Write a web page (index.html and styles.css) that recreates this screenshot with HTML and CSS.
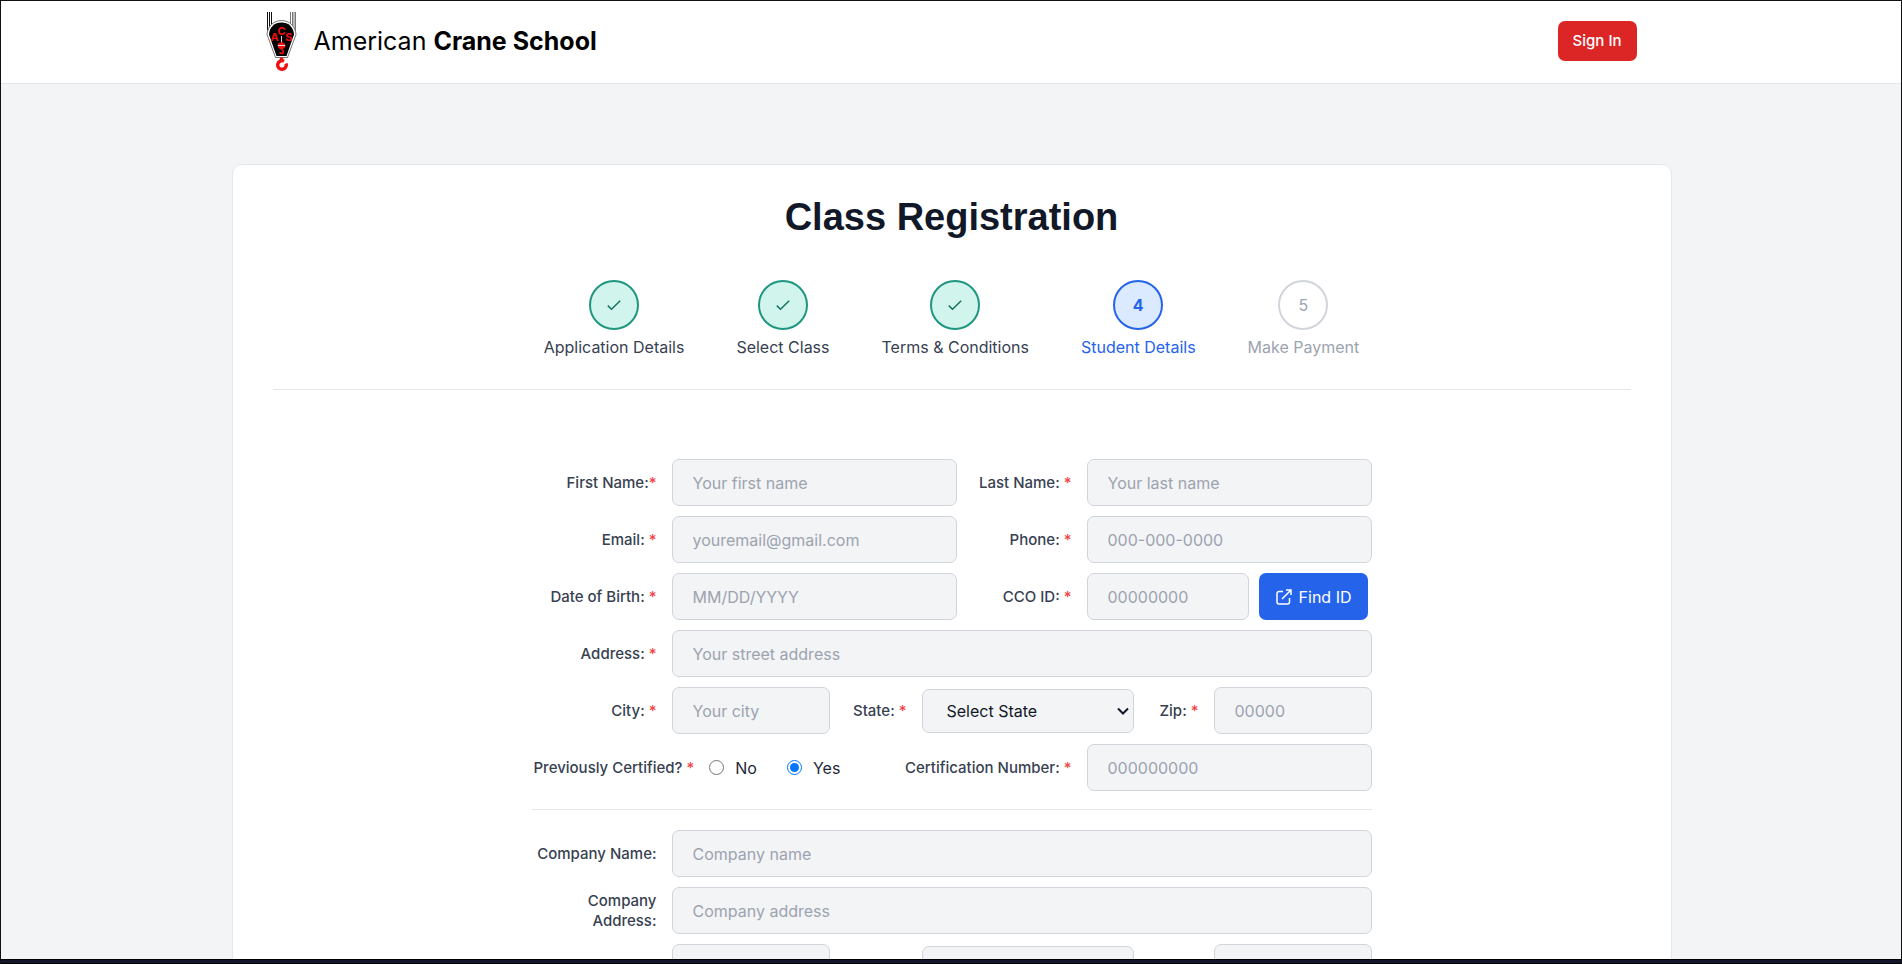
FILE: index.html
```html
<!DOCTYPE html>
<html lang="en">
<head>
<meta charset="utf-8">
<meta name="viewport" content="width=device-width, initial-scale=1">
<title>Class Registration - American Crane School</title>
<link rel="stylesheet" href="styles.css">
</head>
<body>
<div class="window">
  <div class="page">
    <header class="site-header">
      <div class="site-header-inner">
        <a class="brand" href="#">
          <svg class="brand-logo" viewBox="0 0 32 60" aria-hidden="true">
            <path d="M1.500 1v20M3.500 1v16M5.500 1v14" stroke="#111" stroke-width="1" fill="none"/>
            <path d="M24.500 1v14M26.500 1v16M28 1v18M29.500 1v20" stroke="#777" stroke-width="1" fill="none"/>
            <path d="M15.500 9.500C23.500 9.500 29.500 15.500 30 23.500L21.500 46.500H9.500L1 23.500C1.500 15.500 7.500 9.500 15.500 9.500z" fill="#fff" stroke="#777" stroke-width="1"/>
            <path d="M15.500 11.500C22.500 11.500 27.500 16 28 23.500L20.500 45H10.500L3 23.500C3.500 16 8.500 11.500 15.500 11.500z" fill="#000"/>
            <g fill="#f01010" font-family="Inter, sans-serif" font-weight="700" font-size="11" text-anchor="middle">
              <text x="15.500" y="23.500">C</text><text x="8.500" y="30">A</text><text x="22.800" y="30">S</text>
            </g>
            <path d="M15.500 25v7" stroke="#ccc" stroke-width="1"/>
            <path d="M11.800 34.500a3.700 3.200 0 0 1 7.400 0l-.2 2-2.500 2h-2l-2.500-2z" fill="#f01010"/>
            <path d="M11.800 34.500h7.400" stroke="#ddd" stroke-width="1"/>
            <path d="M15.500 38.500c2.500.5 2.200 4 0 4q-1.500 0-1.500-1.500" stroke="#f01010" stroke-width="1.600" fill="none"/>
            <path d="M15.500 46.500v3M20 52.500a4.300 4.300 0 1 1-2-2.300" stroke="#f01010" stroke-width="3.400" fill="none"/>
          </svg>
          <span class="brand-name">American <strong>Crane School</strong></span>
        </a>
        <button class="sign-in" type="button">Sign In</button>
      </div>
    </header>

    <main class="card">
      <h1 class="title">Class Registration</h1>
      <ol class="steps">
        <li class="step step-done"><span class="step-dot"><svg class="check" viewBox="0 0 16 16" aria-hidden="true"><path d="M1.800 8.600 5.500 12.200 14.200 3.800"/></svg></span>Application Details</li>
        <li class="step step-done"><span class="step-dot"><svg class="check" viewBox="0 0 16 16" aria-hidden="true"><path d="M1.800 8.600 5.500 12.200 14.200 3.800"/></svg></span>Select Class</li>
        <li class="step step-done"><span class="step-dot"><svg class="check" viewBox="0 0 16 16" aria-hidden="true"><path d="M1.800 8.600 5.500 12.200 14.200 3.800"/></svg></span>Terms &amp; Conditions</li>
        <li class="step step-current" aria-current="step"><span class="step-dot">4</span>Student Details</li>
        <li class="step step-next"><span class="step-dot">5</span>Make Payment</li>
      </ol>

      <form class="form">
        <div class="row">
          <label class="label label-first" for="first-name">First Name:<span class="req">*</span></label>
          <input class="input" id="first-name" type="text" placeholder="Your first name">
          <label class="label label-second" for="last-name">Last Name: <span class="req">*</span></label>
          <input class="input input-second" id="last-name" type="text" placeholder="Your last name">
        </div>
        <div class="row">
          <label class="label label-first" for="email">Email: <span class="req">*</span></label>
          <input class="input" id="email" type="email" placeholder="youremail@gmail.com">
          <label class="label label-second" for="phone">Phone: <span class="req">*</span></label>
          <input class="input input-second" id="phone" type="tel" placeholder="000-000-0000">
        </div>
        <div class="row">
          <label class="label label-first" for="dob">Date of Birth: <span class="req">*</span></label>
          <input class="input" id="dob" type="text" placeholder="MM/DD/YYYY">
          <label class="label label-second" for="cco">CCO ID: <span class="req">*</span></label>
          <div class="id-group">
            <input class="input" id="cco" type="text" placeholder="00000000">
            <button class="find-id" type="button">
              <svg class="find-icon" viewBox="0 0 16 16" aria-hidden="true"><path d="M7 2.500H3a2 2 0 0 0-2 2V13a2 2 0 0 0 2 2h8.500a2 2 0 0 0 2-2V9M10 1h5v5M15 1 6 10"/></svg>
              Find ID
            </button>
          </div>
        </div>
        <div class="row">
          <label class="label label-first" for="address">Address: <span class="req">*</span></label>
          <input class="input" id="address" type="text" placeholder="Your street address">
        </div>
        <div class="row">
          <label class="label label-first" for="city">City: <span class="req">*</span></label>
          <input class="input" id="city" type="text" placeholder="Your city">
          <label class="label label-state" for="state">State: <span class="req">*</span></label>
          <select class="select" id="state"><option>Select State</option></select>
          <label class="label label-zip" for="zip">Zip: <span class="req">*</span></label>
          <input class="input" id="zip" type="text" placeholder="00000">
        </div>
        <div class="row">
          <div class="certified" role="radiogroup" aria-labelledby="certified-label">
            <span class="label" id="certified-label">Previously Certified? <span class="req">*</span></span>
            <label class="choice"><input class="radio" type="radio" name="certified" value="no">No</label>
            <label class="choice"><input class="radio" type="radio" name="certified" value="yes" checked>Yes</label>
          </div>
          <label class="label label-number" for="cert-number">Certification Number: <span class="req">*</span></label>
          <input class="input input-second" id="cert-number" type="text" placeholder="000000000">
        </div>
        <hr class="rule">
        <div class="row">
          <label class="label label-first" for="company">Company Name:</label>
          <input class="input" id="company" type="text" placeholder="Company name">
        </div>
        <div class="row">
          <label class="label label-first" for="company-address">Company Address:</label>
          <input class="input" id="company-address" type="text" placeholder="Company address">
        </div>
        <div class="row">
          <span class="label label-first"></span>
          <input class="input" type="text" aria-label="Company city">
          <span class="label label-state"></span>
          <select class="select" aria-label="Company state"></select>
          <span class="label label-zip"></span>
          <input class="input" type="text" aria-label="Company zip">
        </div>
      </form>
    </main>
  </div>
  <div class="dock"></div>
</div>
</body>
</html>
```
FILE: styles.css
```css
* {
  box-sizing: border-box;
}

body {
  margin: 0;
  font-family: Inter, "Liberation Sans", sans-serif;
  font-size: 16px;
  line-height: 24px;
  color: #111827;
}

button,
input,
select {
  font: inherit;
  margin: 0;
}

.window {
  position: relative;
  display: flex;
  flex-direction: column;
  height: 100vh;
  border-top: 1px solid #111;
  border-left: 1px solid #111;
  overflow: hidden;
}

.window::after {
  content: "";
  position: absolute;
  top: 0;
  right: 0;
  bottom: 0;
  width: 1px;
  background: #111;
}

.page {
  flex: 1;
  min-height: 0;
  overflow: hidden;
  background: #f3f4f6;
}

.dock {
  height: 5px;
  background: #14142b;
  border-top: 1px solid #000;
  border-bottom: 1px solid #000;
}

.site-header {
  background: #fff;
  border-bottom: 1px solid #e5e7eb;
}

.site-header-inner {
  display: flex;
  align-items: center;
  justify-content: space-between;
  max-width: 1440px;
  margin: 0 auto;
  padding: 10px 35px 12px 34px;
}

.brand {
  display: flex;
  align-items: center;
  gap: 16px;
  color: #000;
  text-decoration: none;
}

.brand-logo {
  width: 32px;
  height: 60px;
}

.brand-name {
  font-size: 25px;
  line-height: 32px;
}

.brand-name strong {
  font-weight: 700;
}

.sign-in {
  height: 40px;
  padding: 0 15px;
  border: 0;
  border-radius: 7px;
  background: #dc2626;
  color: #fff;
  font-size: 15px;
  font-weight: 500;
}

.card {
  max-width: 1440px;
  margin: 80px auto;
  padding: 32px 40px 40px;
  background: #fff;
  border: 1px solid #e5e7eb;
  border-radius: 10px;
}

.title {
  margin: 0 0 43px;
  font-family: "Liberation Sans", Arial, sans-serif;
  font-size: 38px;
  font-weight: 700;
  line-height: 40px;
  text-align: center;
}

.steps {
  display: flex;
  justify-content: center;
  gap: 52px;
  margin: 0;
  padding: 0 0 30px;
  border-bottom: 1px solid #e5e7eb;
  list-style: none;
}

.step {
  display: flex;
  flex-direction: column;
  align-items: center;
  gap: 5px;
}

.step-dot {
  display: flex;
  align-items: center;
  justify-content: center;
  width: 50px;
  height: 50px;
  border: 2px solid currentColor;
  border-radius: 50%;
}

.step-done {
  color: #374151;
}

.step-done .step-dot {
  border-color: #1f9680;
  background: #d1f4ec;
  color: #11735f;
}

.step-current {
  color: #2563eb;
}

.step-current .step-dot {
  background: #dbeafe;
  font-weight: 700;
}

.step-next {
  color: #9ca3af;
}

.step-next .step-dot {
  border-color: #d1d5db;
}

.check {
  width: 16px;
  height: 16px;
  fill: none;
  stroke: currentColor;
  stroke-width: 1.5;
}

.form {
  display: flex;
  flex-direction: column;
  gap: 10px;
  max-width: 840px;
  margin: 69px auto 0;
}

.row {
  display: flex;
  align-items: center;
  gap: 15px;
}

.label {
  flex: none;
  font-size: 15px;
  font-weight: 500;
  line-height: 20px;
  color: #374151;
  text-align: right;
}

.label-first {
  width: 125px;
}

.label-second {
  width: 100px;
}

.label-state {
  width: 62px;
}

.label-zip {
  width: 50px;
}

.label-number {
  margin-left: auto;
}

.req {
  color: #ef4444;
}

.input {
  flex: 1;
  width: 100%;
  min-width: 0;
  height: 47px;
  padding: 0 20px;
  border: 1px solid #d1d5db;
  border-radius: 7px;
  background: #f3f4f6;
  color: #111827;
}

.input::placeholder {
  color: #9ca3af;
}

.input-second,
.id-group {
  flex: 0 0 285px;
}

.select {
  flex: 0 0 212px;
  height: 44px;
  padding: 0 24px;
  border: 1px solid #d1d5db;
  border-radius: 7px;
  background: #f3f4f6 url("data:image/svg+xml,%3Csvg xmlns='http://www.w3.org/2000/svg' viewBox='0 0 12 8' width='12' height='8'%3E%3Cpath d='M1 1.500l5 5 5-5' fill='none' stroke='%23111827' stroke-width='2'/%3E%3C/svg%3E") no-repeat right 4px center;
  color: #111827;
  appearance: none;
}

.id-group {
  display: flex;
  gap: 10px;
  padding-right: 4px;
}

.find-id {
  display: flex;
  align-items: center;
  gap: 7px;
  padding: 0 16px 0 17px;
  border: 0;
  border-radius: 7px;
  background: #2563eb;
  color: #fff;
}

.find-icon {
  width: 16px;
  height: 16px;
  fill: none;
  stroke: currentColor;
  stroke-width: 1.5;
}

.certified {
  display: flex;
  align-items: center;
  padding-left: 2px;
}

.choice {
  display: flex;
  align-items: center;
  gap: 11px;
  margin-left: 15px;
  color: #1f2937;
}

.choice + .choice {
  margin-left: 30px;
}

.radio {
  width: 15px;
  height: 15px;
}

.rule {
  width: 100%;
  height: 1px;
  margin: 8px 0 10px;
  border: 0;
  background: #e5e7eb;
}
```
